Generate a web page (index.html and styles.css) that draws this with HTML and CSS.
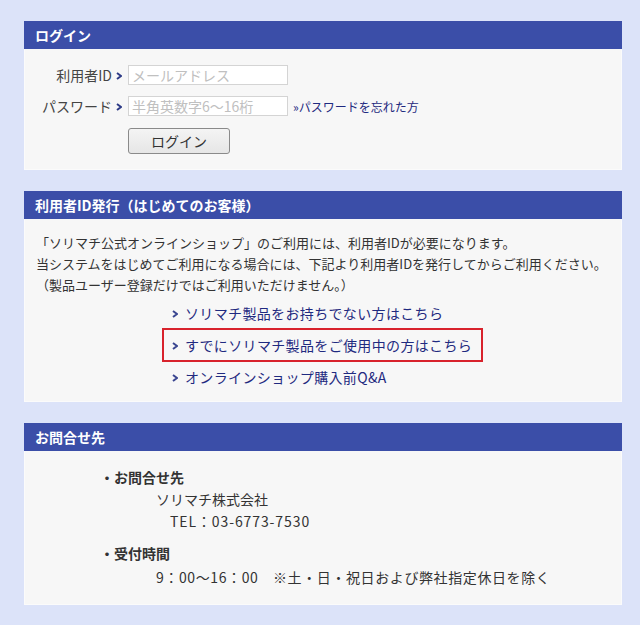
FILE: index.html
```html
<!DOCTYPE html>
<html lang="ja">
<head>
  <meta charset="UTF-8">
  <meta name="viewport" content="width=device-width, initial-scale=1.0">
  <title>ログイン - ソリマチ公式オンラインショップ</title>
  <link rel="stylesheet" href="styles.css">
</head>
<body>
  <div class="page">

    <section class="panel">
      <h2 class="panel-title">ログイン</h2>
      <div class="panel-body login-body">
        <form class="login-form" onsubmit="return false;">
          <div class="login-row">
            <label class="login-label" for="userId">利用者ID<svg class="bullet" width="6" height="8" viewBox="0 0 6 8"><path d="M1 1 L5 4 L1 7" fill="none" stroke="#2c3a86" stroke-width="2"/></svg></label>
            <input class="login-input" type="text" id="userId" placeholder="メールアドレス">
          </div>
          <div class="login-row">
            <label class="login-label" for="userPass">パスワード<svg class="bullet" width="6" height="8" viewBox="0 0 6 8"><path d="M1 1 L5 4 L1 7" fill="none" stroke="#2c3a86" stroke-width="2"/></svg></label>
            <input class="login-input" type="password" id="userPass" placeholder="半角英数字6～16桁">
            <a class="forgot-link" href="#">»パスワードを忘れた方</a>
          </div>
          <div class="login-row">
            <button class="login-btn" type="submit">ログイン</button>
          </div>
        </form>
      </div>
    </section>

    <section class="panel">
      <h2 class="panel-title">利用者ID発行（はじめてのお客様）</h2>
      <div class="panel-body register-body">
        <p class="register-text">
          「ソリマチ公式オンラインショップ」のご利用には、利用者IDが必要になります。<br>
          当システムをはじめてご利用になる場合には、下記より利用者IDを発行してからご利用ください。<br>
          （製品ユーザー登録だけではご利用いただけません。）
        </p>
        <ul class="register-links">
          <li><a href="#"><svg class="bullet" width="6" height="8" viewBox="0 0 6 8"><path d="M1 1 L5 4 L1 7" fill="none" stroke="#3a4590" stroke-width="2"/></svg>ソリマチ製品をお持ちでない方はこちら</a></li>
          <li class="highlight"><a href="#"><svg class="bullet" width="6" height="8" viewBox="0 0 6 8"><path d="M1 1 L5 4 L1 7" fill="none" stroke="#3a4590" stroke-width="2"/></svg>すでにソリマチ製品をご使用中の方はこちら</a></li>
          <li><a href="#"><svg class="bullet" width="6" height="8" viewBox="0 0 6 8"><path d="M1 1 L5 4 L1 7" fill="none" stroke="#3a4590" stroke-width="2"/></svg>オンラインショップ購入前Q&amp;A</a></li>
        </ul>
      </div>
    </section>

    <section class="panel">
      <h2 class="panel-title">お問合せ先</h2>
      <div class="panel-body contact-body">
        <dl class="contact-group">
          <dt>・お問合せ先</dt>
          <dd>ソリマチ株式会社</dd>
          <dd class="tel">TEL：03-6773-7530</dd>
        </dl>
        <dl class="contact-group">
          <dt>・受付時間</dt>
          <dd class="hours">9：00～16：00　※土・日・祝日および弊社指定休日を除く</dd>
        </dl>
      </div>
    </section>

  </div>
</body>
</html>
```

FILE: styles.css
```css
body {
  margin: 0;
  padding: 0;
  background-color: #dce3f9;
  color: #333333;
  font-family: "Noto Sans CJK JP", "Noto Sans", sans-serif;
}

.page {
  width: 598px;
  padding: 21px 18px 20px 24px;
}

.panel {
  margin-bottom: 21px;
}

.panel:last-child {
  margin-bottom: 0;
}

.panel-title {
  margin: 0;
  height: 28px;
  padding-left: 11px;
  background-color: #3b4ea8;
  color: #ffffff;
  font-size: 14px;
  font-weight: bold;
  line-height: 28px;
}

.panel-body {
  background-color: #f7f7f7;
  border: 1px solid #fbfbfb;
  border-top: none;
}

.bullet {
  display: inline-block;
  vertical-align: middle;
}

/* login */

.login-body {
  padding: 16px 0 15px;
}

.login-form {
  margin: 0;
  display: flex;
  flex-direction: column;
  gap: 11px;
}

.login-row {
  display: flex;
  align-items: center;
  height: 20px;
  padding-left: 103px;
}

.login-row:last-child {
  height: 26px;
  margin-top: 1px;
}

.login-label {
  width: 100px;
  margin-left: -100px;
  text-align: right;
  font-size: 14px;
  line-height: 20px;
  color: #444444;
  white-space: nowrap;
}

.login-label .bullet {
  margin-left: 4px;
  margin-right: 6px;
  margin-top: -2px;
}

.login-input {
  box-sizing: border-box;
  width: 160px;
  height: 20px;
  margin-left: 0;
  padding: 0 3px;
  border: 1px solid #d4d4d4;
  background-color: #ffffff;
  font-family: inherit;
  font-size: 14px;
  color: #333333;
}

.login-input::placeholder {
  color: #c0c0c0;
}

.forgot-link {
  margin-left: 5px;
  font-size: 12px;
  color: #1f2a80;
  text-decoration: none;
  white-space: nowrap;
}

.login-btn {
  box-sizing: border-box;
  width: 102px;
  height: 26px;
  border: 1px solid #8a8a8a;
  border-radius: 3px;
  background: linear-gradient(#f4f4f4, #e6e6e6);
  font-family: inherit;
  font-size: 14px;
  color: #333333;
  cursor: pointer;
}

/* register */

.register-body {
  padding: 13px 0 7px 11px;
}

.register-text {
  margin: 0;
  font-size: 13px;
  line-height: 21px;
  color: #333333;
}

.register-links {
  list-style: none;
  margin: 1px 0 0 126px;
  padding: 0;
}

.register-links li {
  width: fit-content;
  border: 2px solid transparent;
  margin-top: -2px;
}

.register-links li:first-child {
  margin-top: 0;
}

.register-links li.highlight {
  border-color: #d8222c;
}

.register-links a {
  display: block;
  padding: 0 9px 0 8px;
  font-size: 14px;
  letter-spacing: 0.35px;
  line-height: 30px;
  color: #1f2a80;
  text-decoration: none;
  white-space: nowrap;
}

.register-links .bullet {
  margin-right: 7px;
  margin-top: -2px;
}

/* contact */

.contact-body {
  padding: 15px 0 16px 75px;
}

.contact-group {
  margin: 0;
}

.contact-group + .contact-group {
  margin-top: 10px;
}

.contact-group dt {
  font-size: 14px;
  font-weight: bold;
  line-height: 22px;
  color: #333333;
}

.contact-group dd {
  margin: 0 0 0 56px;
  font-size: 14px;
  line-height: 22px;
  color: #333333;
}

.contact-group dd.tel {
  margin-left: 70px;
  letter-spacing: 0.9px;
}

.contact-group dd.hours {
  margin-top: 2px;
  letter-spacing: 0.6px;
}
```
